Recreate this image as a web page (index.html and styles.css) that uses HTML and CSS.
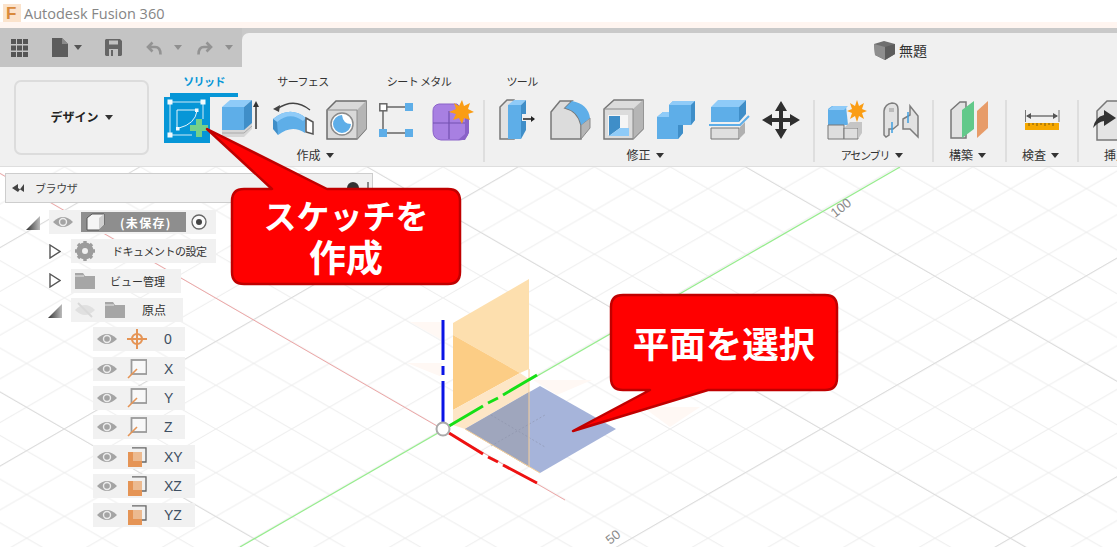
FILE: index.html
```html
<!DOCTYPE html>
<html lang="ja">
<head>
<meta charset="utf-8">
<title>Autodesk Fusion 360</title>
<link rel="stylesheet" href="styles.css">
</head>
<body>
<div class="app">
  <svg class="defs" width="0" height="0" aria-hidden="true">
    <defs>
      <linearGradient id="triFill" x1="0" y1="0" x2="1" y2="0"><stop offset="0" stop-color="#333"/><stop offset="1" stop-color="#bbb"/></linearGradient>
      <pattern id="grid" width="75.7" height="43.7" patternUnits="userSpaceOnUse" patternTransform="translate(443 429)">
        <path d="M0 0L75.7 43.7M75.7 0L0 43.7" stroke="#ececec" stroke-width="1" fill="none"/>
      </pattern>
      <symbol id="eye" viewBox="0 0 20 14"><path d="M0 7Q10 -3 20 7Q10 17 0 7Z" fill="#a4a4a4"/><circle cx="10" cy="7" r="3.5" fill="#a4a4a4" stroke="#ececec" stroke-width="1.4"/></symbol>
      <symbol id="eyeoff" viewBox="0 0 20 18"><path d="M0 9Q10 -1 20 9Q10 19 0 9Z" fill="#e0e0e0"/><path d="M3 2L17 16" stroke="#d8d8d8" stroke-width="2"/></symbol>
      <symbol id="folder" viewBox="0 0 20 16"><path d="M0 0H8L10 3H20V16H0Z" fill="#a6a6a6"/><path d="M0 3H9" stroke="#e8e8e8"/></symbol>
      <symbol id="axis" viewBox="0 0 20 20"><rect x="4.5" y="1" width="15" height="14" fill="#f8f8f8" stroke="#9a9a9a" stroke-width="1.8"/><path d="M1 19L10 10" stroke="#e59455" stroke-width="1.6"/></symbol>
      <symbol id="plane" viewBox="0 0 20 20"><path d="M5 0.8H19V15H14" fill="none" stroke="#666" stroke-width="1.3"/><rect x="1" y="5" width="14" height="15" fill="#e59455"/><rect x="6" y="5" width="9" height="9" fill="#ecba90"/></symbol>
    </defs>
  </svg>

  <header class="titlebar">
    <svg class="app-icon" width="20" height="20" viewBox="0 0 20 20"><rect x="1" y="1" width="18" height="18" fill="#fbe3cc"/><text x="4" y="16" class="app-f">F</text></svg>
    <span class="app-name">Autodesk Fusion 360</span>
  </header>
  <div class="tint"></div>

  <div class="topbar">
    <div class="qat">
      <svg class="qat-grid" width="17" height="18" viewBox="0 0 17 18"><path d="M0 0h5v5H0zM6 0h5v5H6zM12 0h5v5h-5zM0 6.500h5v5H0zM6 6.500h5v5H6zM12 6.500h5v5h-5zM0 13h5v5H0zM6 13h5v5H6zM12 13h5v5h-5z" fill="#555"/></svg>
      <svg class="qat-file" width="16" height="19" viewBox="0 0 16 19"><path d="M0 0H10L16 6V19H0Z" fill="#5c5c5c"/><path d="M10 0V6H16" fill="#8a8a8a"/></svg>
      <span class="caret-dark"></span>
      <svg class="qat-save" width="17" height="17" viewBox="0 0 17 17"><path d="M1 0H15L17 2V16L16 17H1L0 16V1Z" fill="#666"/><rect x="4" y="1.500" width="9" height="4" fill="#c2c2c2"/><rect x="4" y="10" width="9" height="7" fill="#c2c2c2"/><rect x="6" y="11" width="2" height="6" fill="#666"/></svg>
      <svg class="qat-undo" width="16" height="14" viewBox="0 0 16 14"><path d="M6.500 1.500L2 6L6.500 10.500M2 6H9Q14.500 6 14.500 13.500" fill="none" stroke="#939393" stroke-width="2.600"/></svg>
      <span class="caret-light"></span>
      <svg class="qat-redo" width="16" height="14" viewBox="0 0 16 14"><path d="M9.500 1.500L14 6L9.500 10.500M14 6H7Q1.500 6 1.500 13.500" fill="none" stroke="#939393" stroke-width="2.600"/></svg>
      <span class="caret-light"></span>
    </div>
    <div class="doc-tab">
      <svg width="21" height="19" viewBox="0 0 21 19"><path d="M0 3L10 0L21 3V13L11 19L1 14Z" fill="#6f6f6f"/><path d="M0 3L11 6V19L1 14Z" fill="#8e8e8e"/><path d="M11 6L21 3V13L11 19Z" fill="#5d5d5d"/></svg>
      <span>無題</span>
    </div>
  </div>

  <section class="ribbon">
    <div class="design"><span>デザイン<span class="caret"></span></span></div>
    <div class="ribbon-main">
      <nav class="tabs">
        <span class="tab active">ソリッド</span>
        <span class="tab">サーフェス</span>
        <span class="tab">シート メタル</span>
        <span class="tab">ツール</span>
      </nav>
      <div class="groups">
        <div class="group g-create">
          <div class="tools">
            <svg class="tool" viewBox="0 0 46 46"><rect width="47" height="46" fill="#0696d7"/><path d="M6 5H39V22M6 5V38H28" fill="none" stroke="#cfeaf7" stroke-width="1"/><path d="M13 13H33M13 13V31" fill="none" stroke="#e4f4fb" stroke-width="1"/><path d="M33 14Q31 27 15 31" fill="none" stroke="#e4f4fb" stroke-width="1"/><path d="M3.500 2.500h5v5h-5zM36.500 2.500h5v5h-5zM3.500 35.500h5v5h-5zM31 11.500h3.500v3.500H31zM12 30h3.500v3.500H12z" fill="#f2fafd"/><path d="M32 22h6v6h6v6h-6v6h-6v-6H26v-6h6z" fill="#74d08a"/></svg>
            <svg class="tool" viewBox="0 0 46 46"><path d="M5 32L27 32L35 25V32L27 40H5Z" fill="#d6d6d6"/><path d="M5 36H27L35 29" fill="none" stroke="#aaa"/><path d="M5 10H27V33H5Z" fill="#5eaee8"/><path d="M5 10L13 3H35L27 10Z" fill="#8fcbf8"/><path d="M27 10L35 3V26L27 33Z" fill="#3f8ec8"/><path d="M39 32V8" stroke="#333" stroke-width="1.500"/><path d="M36 10L39 4L42 10Z" fill="#333"/></svg>
            <svg class="tool" viewBox="0 0 46 46"><path d="M3 22Q20 8 36 21L35 36Q22 27 8 38Z" fill="#5eaee8"/><path d="M3 22Q20 8 36 21L33 24Q20 14 7 25Z" fill="#8fcbf8"/><path d="M3 22L7 25L8 38L3 32Z" fill="#3f8ec8"/><path d="M36 21L43 25V37L36 35Z" fill="#fff" stroke="#555" stroke-width="1.500"/><path d="M7 12Q24 0 40 13" fill="none" stroke="#444" stroke-width="1.300"/><path d="M3 12L10 8L9 15Z" fill="#444"/></svg>
            <svg class="tool" viewBox="0 0 46 46"><path d="M4 13L13 4H43V32L34 42H4Z" fill="#d9d9d9" stroke="#6c6c6c" stroke-width="1.500"/><path d="M34 13L43 4V32L34 42Z" fill="#b5b5b5"/><path d="M4 13H34V42" fill="none" stroke="#8c8c8c"/><circle cx="19" cy="27" r="11" fill="#fff" stroke="#8a8a8a" stroke-width="1.500"/><path d="M19 18A9 9 0 1 0 28 27Q20 27 19 18Z" fill="#5eaee8"/></svg>
            <svg class="tool" viewBox="0 0 46 46"><path d="M11 10H29M7 14V32M11 36H29" stroke="#666" stroke-width="1.500"/><rect x="3.800" y="6.800" width="7" height="7" fill="#fff" stroke="#666" stroke-width="1.500"/><rect x="29" y="6" width="8" height="8" fill="#5eaee8"/><rect x="3" y="32" width="8" height="8" fill="#5eaee8"/><rect x="29" y="32" width="8" height="8" fill="#5eaee8"/></svg>
            <svg class="tool" viewBox="0 0 46 46"><path d="M10 7H28L39 17V35Q38 43 30 43H12Q4 42 4 34V14Q4 8 10 7Z" fill="#a880e2" stroke="#8a62c8"/><path d="M4 26H36M20 14V42" stroke="#7350b0" stroke-width="1.200"/><path d="M36 20V37L29 43H36L40 36V22Z" fill="#8a62c8"/><path d="M33 3L35 9L41 6L39 12L45 15L39 17L41 23L35 21L33 27L30 21L24 23L27 17L20 15L27 12L25 6L30 9Z" fill="#fa9d14"/></svg>
          </div>
          <div class="glabel nudge">作成<span class="caret"></span></div>
        </div>
        <i class="sep"></i>
        <div class="group g-modify">
          <div class="tools">
            <svg class="tool" viewBox="0 0 46 46"><path d="M6 42V10L13 3H20V42Z" fill="#e2e2e2" stroke="#777" stroke-width="1.500"/><path d="M14 8H27V42H14Z" fill="#5eaee8"/><path d="M14 8L20 3H32L27 8Z" fill="#8fcbf8"/><path d="M27 8L32 3V33L27 42Z" fill="#3f8ec8"/><rect x="28" y="17" width="8" height="7" fill="#f0f0f0"/><path d="M29 22H40" stroke="#222" stroke-width="1.500"/><path d="M37 19L41 22L37 25Z" fill="#222"/></svg>
            <svg class="tool" viewBox="0 0 46 46"><path d="M4 15L13 4H25L18 11Q31 14 34 28V42H4Z" fill="#dcdcdc" stroke="#777" stroke-width="1.500"/><path d="M34 28L43 21V31L34 42Z" fill="#b5b5b5" stroke="#888"/><path d="M18 11L25 4Q41 7 43 21L34 28Q31 14 18 11Z" fill="#5eaee8"/></svg>
            <svg class="tool" viewBox="0 0 46 46"><path d="M4 12L14 3H43V32L33 42H4Z" fill="#dcdcdc" stroke="#777" stroke-width="1.500"/><path d="M33 12L43 3V32L33 42Z" fill="#b5b5b5"/><path d="M4 12H33V42" fill="none" stroke="#8a8a8a"/><rect x="8" y="18" width="20" height="20" fill="#f5f5f5"/><path d="M9 19H20V31L9 39Z" fill="#3f8ec8"/><path d="M9 39L20 31H29L29 39Z" fill="#8fcbf8"/></svg>
            <svg class="tool" viewBox="0 0 46 46"><path d="M4 20L10 15H16V8L20 4H42V23L38 28H30V36L25 42H4Z" fill="#5eaee8"/><path d="M16 8L20 4H42L38 8Z" fill="#8fcbf8"/><path d="M4 20L10 15H16V20Z" fill="#8fcbf8"/><path d="M38 8L42 4V23L38 28Z" fill="#3f8ec8"/><path d="M25 28H30V36L25 42Z" fill="#3f8ec8"/></svg>
            <svg class="tool" viewBox="0 0 46 46"><path d="M5 10H33V25H5Z" fill="#5eaee8"/><path d="M5 10L12 3H40L33 10Z" fill="#8fcbf8"/><path d="M33 10L40 3V17L33 25Z" fill="#3f8ec8"/><path d="M5 31H33V42H5Z" fill="#dfdfdf" stroke="#777"/><path d="M33 31L39 25V36L33 42Z" fill="#b0b0b0"/><path d="M3 28H34L43 19" fill="none" stroke="#5eaee8" stroke-width="2"/></svg>
            <svg class="tool" viewBox="0 0 46 46"><path d="M22 4L28 14H24V21H31V17L41 23L31 29V25H24V32H28L22 42L16 32H20V25H13V29L3 23L13 17V21H20V14H16Z" fill="#2f2f2f"/></svg>
          </div>
          <div class="glabel nudge">修正<span class="caret"></span></div>
        </div>
        <i class="sep"></i>
        <div class="group g-assemble">
          <div class="tools">
            <svg class="tool" viewBox="0 0 46 46"><path d="M4 12L8 9H22L24 28H4Z" fill="#5eaee8"/><path d="M4 13L9 9H24L20 13Z" fill="#8fcbf8"/><path d="M4 28H20V42H4Z" fill="#dedede" stroke="#777"/><path d="M20 31H34V42H20Z" fill="#dedede" stroke="#777"/><path d="M20 31L26 25H38V36L34 42V31Z" fill="#c5c5c5"/><path d="M33 3L35 9L40 6L38 12L43 14L38 16L40 22L35 19L33 25L31 19L26 22L28 16L23 14L28 12L26 6L31 9Z" fill="#fa9d14"/></svg>
            <svg class="tool" viewBox="0 0 46 46"><path d="M7 38V14Q8 7 15 6Q21 6 21 12V28L16 32H12V38L9 40Z" fill="#e2e2e2" stroke="#7d7d7d" stroke-width="1.500"/><path d="M33 9L41 19V40L33 32H26V22L33 18Z" fill="#e2e2e2" stroke="#7d7d7d" stroke-width="1.500"/><path d="M12 11h5v4h-5z" fill="#bbb"/><path d="M15 25V36M31 15V26" stroke="#3f9ee0" stroke-width="1.500"/></svg>
          </div>
          <div class="glabel kana">アセンブリ<span class="caret"></span></div>
        </div>
        <i class="sep"></i>
        <div class="group g-build">
          <div class="tools">
            <svg class="tool" viewBox="0 0 46 46"><path d="M5 41V13L14 5H20V41Z" fill="#e2e2e2" stroke="#777" stroke-width="1.500"/><path d="M16 41V13L28 4V32Z" fill="#62c98a"/><path d="M31 41V14L42 4V31Z" fill="#e79c69"/></svg>
          </div>
          <div class="glabel shift">構築<span class="caret"></span></div>
        </div>
        <i class="sep"></i>
        <div class="group g-inspect">
          <div class="tools">
            <svg class="tool" viewBox="0 0 46 46"><path d="M6.500 13V25M40 13V25" stroke="#777"/><path d="M8 19H38" stroke="#555" stroke-width="1.200"/><path d="M12 16L7 19L12 22ZM34 16L39 19L34 22Z" fill="#555"/><rect x="6" y="26" width="34" height="7" fill="#f6a800"/><path d="M10 26v3M14 26v2M18 26v3M22 26v2M26 26v3M30 26v2M34 26v3" stroke="#7d5b0d"/></svg>
          </div>
          <div class="glabel shift">検査<span class="caret"></span></div>
        </div>
        <i class="sep"></i>
        <div class="group g-insert">
          <div class="tools">
            <svg class="tool" viewBox="0 0 46 46"><path d="M7 14L17 4H46V43H7Z" fill="#e4e4e4" stroke="#777" stroke-width="1.500"/><path d="M3 31Q5 20 14 18V13L26 21L14 29V24Q8 25 3 31Z" fill="#333"/></svg>
          </div>
          <div class="glabel">挿入<span class="caret"></span></div>
        </div>
      </div>
    </div>
  </section>

  <svg class="canvas" width="1117" height="380" viewBox="0 167 1117 380">
    <rect x="0" y="167" width="1117" height="380" fill="url(#grid)"/>
    <g stroke="#dcdcdc" stroke-width="1">
      <path d="M0 392L1117 1037M0 -45.100L1117 599.900M0 -263.600L1117 381.400M0 -482.100L1117 162.900M0 -700.600L1117 -55.600"/>
      <path d="M0 466L1117 -179M0 247.600L1117 -397.400M0 903L1117 258M0 1121.600L1117 476.600M0 1340L1117 695"/>
    </g>
    <g fill="#fff8f4">
      <path d="M410 322H442V340Z"/><path d="M407 363H442V377Z"/><path d="M533 380H592L557 395Z"/><path d="M643 407H700L670 427Z"/>
    </g>
    <path d="M0 173.400L565 500" stroke="#eda6a6" stroke-width="1" fill="none"/>
    <path d="M240 547L900 167" stroke="#97ec8e" stroke-width="1.200" fill="none"/>
    <text class="dim" transform="translate(835 218) rotate(-38)">100</text>
    <text class="dim" transform="translate(610 545) rotate(-38)">50</text>
    <path d="M453 323L529 279V369L520 373L453 335Z" fill="#fddfae"/>
    <path d="M453 335L520 373L453 410Z" fill="#fccd85"/>
    <path d="M453 410L520 373L529 379V392L465 429L453 425Z" fill="#fde6c6"/>
    <path d="M540 386L616 429L540 473L465 429Z" fill="#a6b4da"/>
    <path d="M465 429L529 392V467Z" fill="#9fa6bd"/>
    <path d="M491 415L545 447M491 446L545 415" stroke="#8a90a8" stroke-opacity=".55" stroke-dasharray="2 2" fill="none"/>
    <path d="M465 429L540 473M529 369V467" stroke="#f6cf98" fill="none"/>
    <g fill="none" stroke-width="3">
      <path d="M443 320V360M443 366V375M443 381V425" stroke="#0a14e6"/>
      <path d="M449 426L483 406M488 403L498 398M503 395L537 375" stroke="#16e016"/>
      <path d="M449 433L483 454M488 457L498 462M503 465L537 483" stroke="#ee1111"/>
    </g>
    <circle cx="443" cy="429" r="6.500" fill="#fff" stroke="#aaa" stroke-width="2"/>
  </svg>

  <div class="browser">
    <span class="browser-arrows"></span>
    <span class="browser-title">ブラウザ</span>
    <span class="browser-dot"></span>
    <span class="browser-pin"></span>
  </div>

  <ul class="tree">
    <li class="tree-row lvl-root">
      <svg class="tri" width="14" height="14" viewBox="0 0 14 14"><path d="M0 14L14 0V14Z" fill="url(#triFill)"/></svg>
      <div class="cell">
        <svg class="eye" width="20" height="14"><use href="#eye"/></svg>
        <div class="root-chip">
          <svg width="19" height="18" viewBox="0 0 19 18"><path d="M1 5L6 1H18V12L13 17H1Z" fill="#f5f5f5" stroke="#555"/><path d="M13 5L18 1V12L13 17Z" fill="#cfcfcf"/></svg>
          <span>(未保存)</span>
        </div>
        <svg class="radio" width="16" height="16" viewBox="0 0 16 16"><circle cx="8" cy="8" r="7" fill="#fbfbfb" stroke="#666" stroke-width="1.300"/><circle cx="8" cy="8" r="3" fill="#444"/></svg>
      </div>
    </li>
    <li class="tree-row lvl-1">
      <svg class="tri-o" width="12" height="15" viewBox="0 0 12 15"><path d="M1 1L11 7.500L1 14Z" fill="#fff" stroke="#555" stroke-width="1.400"/></svg>
      <div class="cell w-145">
        <svg class="ico" width="20" height="20" viewBox="0 0 20 20"><circle cx="10" cy="10" r="6.500" fill="none" stroke="#9c9c9c" stroke-width="4"/><path d="M10 0V20M0 10H20M3 3L17 17M17 3L3 17" stroke="#9c9c9c" stroke-width="3.400"/><circle cx="10" cy="10" r="3" fill="#f1f1f1"/></svg>
        <span class="label l-doc">ドキュメントの設定</span>
      </div>
    </li>
    <li class="tree-row lvl-1">
      <svg class="tri-o" width="12" height="15" viewBox="0 0 12 15"><path d="M1 1L11 7.500L1 14Z" fill="#fff" stroke="#555" stroke-width="1.400"/></svg>
      <div class="cell w-110">
        <svg class="ico" width="20" height="16"><use href="#folder"/></svg>
        <span class="label l-view">ビュー管理</span>
      </div>
    </li>
    <li class="tree-row lvl-1">
      <svg class="tri-f" width="14" height="14" viewBox="0 0 14 14"><path d="M0 14L14 0V14Z" fill="url(#triFill)"/></svg>
      <div class="cell w-112">
        <svg class="ico" width="20" height="18"><use href="#eyeoff"/></svg>
        <svg class="ico-2" width="20" height="16"><use href="#folder"/></svg>
        <span class="label l-origin">原点</span>
      </div>
    </li>
    <li class="tree-row lvl-2"><div class="cell w-92">
      <svg class="eye" width="20" height="14"><use href="#eye"/></svg>
      <svg class="ico-3" width="20" height="20" viewBox="0 0 20 20"><circle cx="10" cy="10" r="5" fill="none" stroke="#e59455" stroke-width="2.200"/><path d="M10 0V20M0 10H20" stroke="#e59455" stroke-width="2"/></svg>
      <span class="axis">0</span></div></li>
    <li class="tree-row lvl-2"><div class="cell w-92">
      <svg class="eye" width="20" height="14"><use href="#eye"/></svg>
      <svg class="ico-3" width="20" height="20"><use href="#axis"/></svg>
      <span class="axis">X</span></div></li>
    <li class="tree-row lvl-2"><div class="cell w-92">
      <svg class="eye" width="20" height="14"><use href="#eye"/></svg>
      <svg class="ico-3" width="20" height="20"><use href="#axis"/></svg>
      <span class="axis">Y</span></div></li>
    <li class="tree-row lvl-2"><div class="cell w-92">
      <svg class="eye" width="20" height="14"><use href="#eye"/></svg>
      <svg class="ico-3" width="20" height="20"><use href="#axis"/></svg>
      <span class="axis">Z</span></div></li>
    <li class="tree-row lvl-2"><div class="cell w-102">
      <svg class="eye" width="20" height="14"><use href="#eye"/></svg>
      <svg class="ico-3" width="20" height="20"><use href="#plane"/></svg>
      <span class="axis">XY</span></div></li>
    <li class="tree-row lvl-2"><div class="cell w-102">
      <svg class="eye" width="20" height="14"><use href="#eye"/></svg>
      <svg class="ico-3" width="20" height="20"><use href="#plane"/></svg>
      <span class="axis">XZ</span></div></li>
    <li class="tree-row lvl-2"><div class="cell w-102">
      <svg class="eye" width="20" height="14"><use href="#eye"/></svg>
      <svg class="ico-3" width="20" height="20"><use href="#plane"/></svg>
      <span class="axis">YZ</span></div></li>
  </ul>

  <div class="callout callout-sketch">
    <svg class="callout-shape" width="254" height="156" viewBox="0 0 254 156"><path d="M0 0L65 60L37 60Q25 60 25 72L25 143Q25 155 37 155L241 155Q253 155 253 143L253 72Q253 60 241 60L120 60Z"/></svg>
    <div class="callout-text"><p class="callout-lines">スケッチを<br><span class="big">作成</span></p></div>
  </div>
  <div class="callout callout-plane">
    <svg class="callout-shape" width="265" height="137" viewBox="0 0 265 137"><path d="M0 136L77 95L50 95Q38 95 38 83L38 12Q38 0 50 0L252 0Q264 0 264 12L264 83Q264 95 252 95L135 95Z"/></svg>
    <div class="callout-text"><p class="callout-lines">平面を選択</p></div>
  </div>
</div>
</body>
</html>
```
FILE: styles.css
```css
* { box-sizing: border-box; }
html, body { margin: 0; padding: 0; }
body {
  width: 1117px;
  height: 547px;
  overflow: hidden;
  background: #fff;
  font-family: "Noto Sans CJK JP", "Noto Sans", sans-serif;
  color: #333;
}
svg { display: block; flex: none; }
.app { position: relative; width: 1117px; height: 547px; overflow: hidden; }
.defs { position: absolute; }

/* window title */
.titlebar { height: 22px; display: flex; align-items: center; padding: 4px 0 0 2px; background: #fff; }
.app-icon { margin-right: 2px; }
.app-f { font: bold 17px "Liberation Sans", sans-serif; fill: #d98a3c; }
.app-name { font: 14.500px "Open Sans", "Liberation Sans", sans-serif; color: #858585; }
.tint { height: 6px; background: #fff5f0; }

/* quick access */
.topbar { height: 39px; display: flex; background: #c9c9c9; }
.qat { width: 242px; display: flex; align-items: center; background: #c4c4c4; padding-left: 11px; }
.qat-file { margin-left: 24px; }
.qat-save { margin-left: 23px; }
.qat-undo { margin-left: 24px; }
.qat-redo { margin-left: 15px; }
.caret-dark, .caret-light { width: 0; height: 0; border-left: 4.500px solid transparent; border-right: 4.500px solid transparent; }
.caret-dark { border-top: 5px solid #555; margin-left: 6px; }
.caret-light { border-top: 5px solid #8f8f8f; margin-left: 12px; }
.doc-tab {
  flex: 1;
  margin-top: 5px;
  background: #f0f0f0;
  border-top-left-radius: 7px;
  display: flex;
  align-items: center;
  gap: 4px;
  padding-left: 632px;
  font-size: 14px;
}

/* ribbon */
.ribbon { height: 100px; display: flex; align-items: flex-start; background: #f0f0f0; padding-left: 14px; border-bottom: 1px solid #dedede; }
.design {
  width: 135px;
  height: 75px;
  margin-top: 13px;
  padding-bottom: 2px;
  border: 2px solid #dcdcdc;
  border-radius: 7px;
  display: flex;
  align-items: center;
  justify-content: center;
  font-size: 12px;
  font-weight: 700;
  color: #222;
}
.caret { display: inline-block; width: 0; height: 0; margin-left: 6px; vertical-align: 2px; border-left: 4px solid transparent; border-right: 4px solid transparent; border-top: 5px solid #333; }
.ribbon-main { margin-left: 15px; flex: 1; min-width: 0; }
.tabs { height: 30px; margin-left: 6px; display: grid; grid-template-columns: 68px 130px 102px 104px; }
.tab { height: 30px; padding-top: 5px; line-height: 18px; font-size: 11px; letter-spacing: -0.600px; text-align: center; color: #333; }
.tab.active { border-bottom: 4px solid #0696d7; color: #0696d7; font-weight: 700; }
.groups { display: flex; align-items: flex-start; }
.tools { display: flex; gap: 7px; }
.tool { width: 46px; height: 46px; }
.glabel { margin-top: 3px; line-height: 18px; height: 18px; font-size: 12px; text-align: center; white-space: nowrap; color: #333; }
.glabel .caret { margin-left: 5px; }
.nudge { padding-right: 9px; }
.kana { font-size: 11px; letter-spacing: -1.200px; padding-right: 3px; }
.kana .caret { margin-left: 6px; }
.shift { padding-right: 3px; }
.sep { display: block; flex: none; width: 2px; height: 62px; margin-top: 3px; background: #dedede; }
.g-create { padding-right: 8px; }
.g-modify { padding: 0 8px 0 9px; }
.g-assemble { padding: 0 9px 0 9px; }
.g-build { padding: 0 13px 0 12px; }
.g-inspect { padding: 0 12px 0 12px; }
.g-insert { padding-left: 11px; }
.g-insert .glabel { padding-left: 14px; text-align: left; }

/* viewport */
.canvas { position: absolute; left: 0; top: 167px; }
.dim { font: 13px "Liberation Sans", sans-serif; fill: #8a8a8a; }

/* browser panel */
.browser {
  position: absolute;
  left: 5px;
  top: 173px;
  width: 368px;
  height: 30px;
  display: flex;
  align-items: center;
  background: #f0f0f0;
  border: 1px solid #cdcdcd;
}
.browser-arrows { width: 12px; height: 8px; margin-left: 6px; background: #444; clip-path: polygon(0 50%, 50% 0, 50% 100%, 100% 0, 100% 100%, 50% 50%, 50% 100%); }
.browser-title { margin-left: 11px; font-size: 11px; color: #444; white-space: nowrap; letter-spacing: -0.400px; }
.browser-dot { width: 12px; height: 12px; margin-left: auto; border-radius: 50%; background: #333; }
.browser-pin { width: 2px; height: 12px; margin: 0 3px 0 8px; background: #888; }

/* tree */
.tree { position: absolute; left: 0; top: 210px; margin: 0; padding: 0; list-style: none; display: flex; flex-direction: column; gap: 5.330px; }
.tree-row { height: 24px; display: flex; align-items: center; }
.cell { height: 24px; display: flex; align-items: center; background: #f1f1f1; }
.lvl-root { padding-left: 26px; }
.lvl-root .tri { margin: 1px 9px 0 0; }
.lvl-root .cell { width: 167px; padding-left: 4px; }
.lvl-1 { padding-left: 48px; }
.lvl-1 .tri-o { margin-left: 1px; margin-right: 10px; }
.lvl-1 .tri-f { margin-right: 9px; margin-top: 3px; }
.lvl-2 { padding-left: 93px; }
.lvl-2 .cell { padding-left: 4px; }
.lvl-1 .cell { padding-left: 4px; }
.w-145 { width: 145px; }
.w-110 { width: 110px; }
.w-112 { width: 112px; }
.w-92 { width: 92px; }
.w-102 { width: 102px; }
.ico-2 { margin-left: 10px; }
.ico-3 { margin-left: 10px; }
.label { font-size: 11px; color: #333; white-space: nowrap; }
.l-doc { margin-left: 17px; letter-spacing: -0.500px; }
.l-view { margin-left: 15px; }
.l-origin { margin-left: 17px; font-size: 12px; }
.axis { margin-left: 17px; font: 14px "Liberation Sans", sans-serif; color: #3e4f62; }
.root-chip { width: 105px; height: 20px; margin-left: 8px; padding-left: 5px; display: flex; align-items: center; background: #8e8e8e; color: #fff; font-size: 12px; font-weight: 700; }
.root-chip span { margin-left: 15px; letter-spacing: 1.300px; white-space: nowrap; }
.radio { margin-left: 5px; }

/* callouts */
.callout { position: absolute; }
.callout-sketch { left: 207px; top: 129px; width: 254px; height: 156px; }
.callout-plane { left: 573px; top: 295px; width: 265px; height: 137px; }
.callout-shape { position: absolute; left: 0; top: 0; overflow: visible; }
.callout-shape path { fill: #f00; stroke: #c00000; stroke-width: 2.500px; stroke-linejoin: round; }
.callout-text { position: absolute; display: flex; align-items: center; justify-content: center; text-align: center; color: #fff; font-weight: 700; }
.callout-lines { margin: 0; }
.callout-sketch .callout-text { left: 25px; top: 60px; width: 228px; height: 95px; font-size: 33px; line-height: 41px; }
.callout-sketch .big { font-size: 37px; }
.callout-plane .callout-text { left: 38px; top: 0; width: 226px; height: 95px; font-size: 36.500px; line-height: 44px; }
```
